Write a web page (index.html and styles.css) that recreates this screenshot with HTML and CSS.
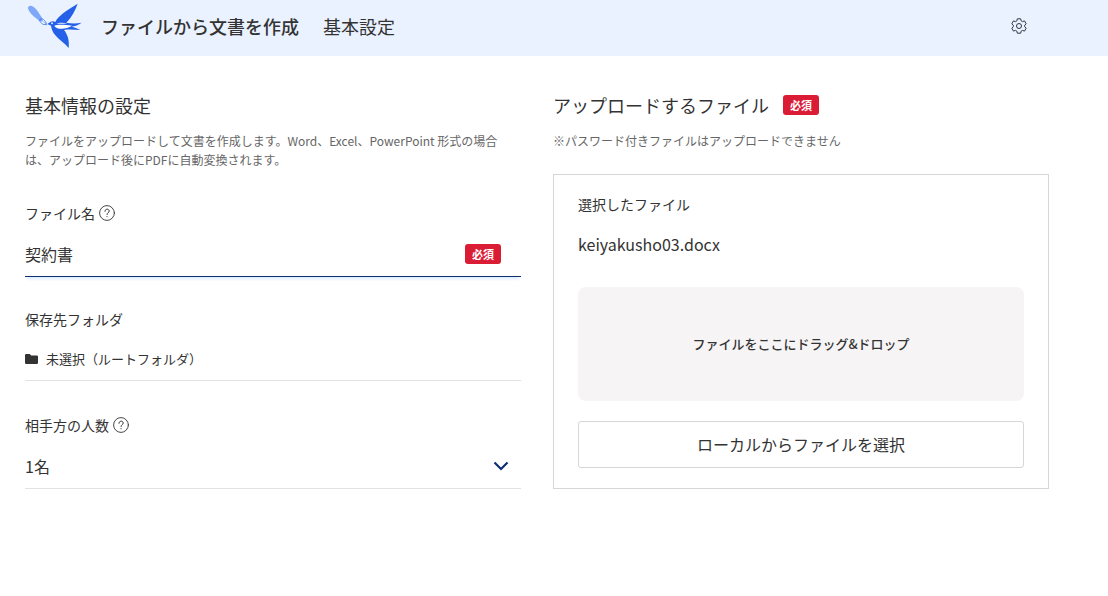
FILE: index.html
```html
<!DOCTYPE html>
<html lang="ja">
<head>
<meta charset="utf-8">
<meta name="viewport" content="width=device-width, initial-scale=1">
<title>ファイルから文書を作成</title>
<link rel="stylesheet" href="styles.css">
</head>
<body>
<header class="header">
  <svg class="logo" viewBox="0 0 210 168" aria-hidden="true">
    <path fill="#7fa8f8" d="M24 25C23 16 33 15 40 20C50 27 58 40 65 52L55 60C43 51 27 39 24 25Z"/>
    <path fill="#5d8df5" d="M55 60L64 52L69 57L59 65Z"/>
    <path fill="#fff" stroke="#5d8df5" stroke-width="3" d="M61 66L70 58L77 66L80 74L69 73Z"/>
    <path stroke="#5d8df5" stroke-width="2" d="M67 63L81 74"/>
    <path fill="#2460e8" d="M82 72L91 66C96 63 102 64 106 66C113 48 144 28 173 11C166 31 155 52 139 68C154 71 170 71 185 68C176 75 164 78 154 80C163 82 172 85 181 90C165 90 151 87 132 90C142 102 149 121 146 144C134 130 117 119 106 106C98 96 94 86 93 77Z"/>
    <path fill="#fff" d="M103 77C114 73 132 74 156 77C146 84 132 87 119 86C111 85 106 82 103 77Z"/>
    <path fill="#eaf2ff" d="M109 71C120 66 129 68 143 72L130 71Z"/>
    <circle cx="96" cy="70" r="3" fill="#d8e6ff"/>
  </svg>
  <h1 class="title">ファイルから文書を作成</h1>
  <span class="step">基本設定</span>
  <button class="settings" type="button" aria-label="設定">
    <svg viewBox="0 0 16 16" width="16" height="16" fill="none" stroke="#303642" stroke-linejoin="round">
      <path d="M6.3 .8H9.7L10.1 2.8L11.5 3.6L13.5 2.9L15.2 5.8L13.7 7.2V8.8L15.2 10.2L13.5 13.1L11.5 12.4L10.1 13.2L9.7 15.2H6.3L5.9 13.2L4.5 12.4L2.5 13.1L.8 10.2L2.3 8.8V7.2L.8 5.8L2.5 2.9L4.5 3.6L5.9 2.8Z"/>
      <circle cx="8" cy="8" r="2.5"/>
    </svg>
  </button>
</header>
<main class="content">
  <section>
    <h2 class="heading">基本情報の設定</h2>
    <p class="note">ファイルをアップロードして文書を作成します。Word、Excel、PowerPoint 形式の場合は、アップロード後にPDFに自動変換されます。</p>
    <form class="fields">
      <div class="field">
        <div class="label-row">
          <label for="file-name">ファイル名</label>
          <button class="help" type="button" aria-label="ファイル名のヘルプ">
            <svg viewBox="0 0 16 16" width="16" height="16" fill="none" stroke="#333" stroke-linecap="round"><circle cx="8" cy="8" r="7.4" stroke-width=".9"/><path d="M5.9 6.3C5.9 3.4 10.2 3.5 10.2 6.1C10.2 7.7 8 7.7 8 9.5M8 11.6V11.8"/></svg>
          </button>
        </div>
        <div class="control focused">
          <input class="input" id="file-name" type="text" value="契約書" required>
          <span class="badge">必須</span>
        </div>
      </div>
      <div class="field">
        <div class="label-row"><span id="folder-label">保存先フォルダ</span></div>
        <button class="control folder" type="button" aria-describedby="folder-label">
          <svg viewBox="0 0 14 12" width="14" height="12" fill="#333"><path d="M0 2.2Q0 1 1.2 1H4.7L6.2 2.4H11.9Q13 2.4 13 3.6V10Q13 11 11.9 11H1.2Q0 11 0 9.9Z"/></svg>
          <span>未選択（ルートフォルダ）</span>
        </button>
      </div>
      <div class="field">
        <div class="label-row">
          <label for="people">相手方の人数</label>
          <button class="help" type="button" aria-label="相手方の人数のヘルプ">
            <svg viewBox="0 0 16 16" width="16" height="16" fill="none" stroke="#333" stroke-linecap="round"><circle cx="8" cy="8" r="7.4" stroke-width=".9"/><path d="M5.9 6.3C5.9 3.4 10.2 3.5 10.2 6.1C10.2 7.7 8 7.7 8 9.5M8 11.6V11.8"/></svg>
          </button>
        </div>
        <div class="control">
          <select class="select" id="people"><option>1名</option><option>2名</option><option>3名</option></select>
          <svg class="chevron" viewBox="0 0 16 10" width="16" height="10" fill="none" stroke="#0e2f70" stroke-width="2.2"><path d="M1.5 1.5L8 8L14.5 1.5"/></svg>
        </div>
      </div>
    </form>
  </section>
  <section>
    <h2 class="heading">アップロードするファイル<span class="badge">必須</span></h2>
    <p class="note">※パスワード付きファイルはアップロードできません</p>
    <div class="upload">
      <h3 class="selected">選択したファイル</h3>
      <p class="file">keiyakusho03.docx</p>
      <div class="drop">ファイルをここにドラッグ&amp;ドロップ</div>
      <button class="browse" type="button">ローカルからファイルを選択</button>
    </div>
  </section>
</main>
</body>
</html>
```
FILE: styles.css
```css
* {
  box-sizing: border-box;
}

body {
  margin: 0;
  background: #fff;
  color: #333;
  font-family: "Noto Sans CJK JP", sans-serif;
  font-size: 16px;
}

h1, h2, h3, p {
  margin: 0;
  font-weight: 400;
}

button, input, select {
  margin: 0;
  padding: 0;
  border: 0;
  background: none;
  color: inherit;
  font: inherit;
  outline: none;
}

svg {
  display: block;
  flex: none;
}

.header {
  display: flex;
  align-items: center;
  height: 56px;
  padding: 0 81px 4px 20px;
  background: #eaf2ff;
  font-size: 18px;
  line-height: 26px;
}

.logo {
  align-self: flex-start;
  width: 70px;
  height: 56px;
  margin-right: 11px;
}

.title {
  margin-right: 24px;
  font-size: 18px;
  font-weight: 500;
}

.settings {
  margin-left: auto;
}

.content {
  display: grid;
  grid-template-columns: 1fr 1fr;
  gap: 32px;
  padding: 35px 59px 36px 25px;
}

.heading {
  display: flex;
  align-items: center;
  gap: 14px;
  height: 28px;
  font-size: 18px;
}

.note {
  margin-top: 12px;
  color: #666;
  font-size: 12px;
  line-height: 19px;
}

.badge {
  flex: none;
  width: 36px;
  border-radius: 3px;
  background: #da1c34;
  color: #fff;
  font-size: 11px;
  font-weight: 700;
  line-height: 20px;
  text-align: center;
}

.fields {
  display: grid;
  grid-auto-rows: 1fr;
  gap: 32px;
  margin-top: 34px;
}

.label-row {
  display: flex;
  align-items: center;
  gap: 4px;
  margin-bottom: 10px;
  font-size: 14px;
  line-height: 20px;
}

.help {
  height: 16px;
}

.control {
  display: flex;
  align-items: center;
  width: 100%;
  height: 44px;
  padding-bottom: 2px;
  border-bottom: 1px solid #e2e2e2;
  position: relative;
}

.focused {
  padding-right: 20px;
  border-bottom-color: #0e2f70;
  box-shadow: 0 4px 3px -2px #dcebff;
}

.input {
  flex: 1;
  min-width: 0;
  height: 100%;
}

.folder {
  gap: 7px;
  height: 42px;
  font-size: 13px;
}

.select {
  width: 100%;
  height: 100%;
  appearance: none;
}

.chevron {
  position: absolute;
  right: 12px;
  top: 16px;
  pointer-events: none;
}

.upload {
  display: flex;
  flex-direction: column;
  margin-top: 24px;
  padding: 19px 24px 20px;
  border: 1px solid #d6d6d6;
}

.selected {
  font-size: 14px;
  line-height: 20px;
}

.file {
  margin-top: 18px;
  line-height: 24px;
}

.drop {
  display: grid;
  place-items: center;
  margin-top: 31px;
  padding: 47px 16px;
  border-radius: 8px;
  background: #f6f4f5;
  font-size: 13px;
  font-weight: 500;
  line-height: 20px;
}

.browse {
  height: 47px;
  margin-top: 20px;
  padding-bottom: 2px;
  border: 1px solid #d6d6d6;
  border-radius: 3px;
}
```
